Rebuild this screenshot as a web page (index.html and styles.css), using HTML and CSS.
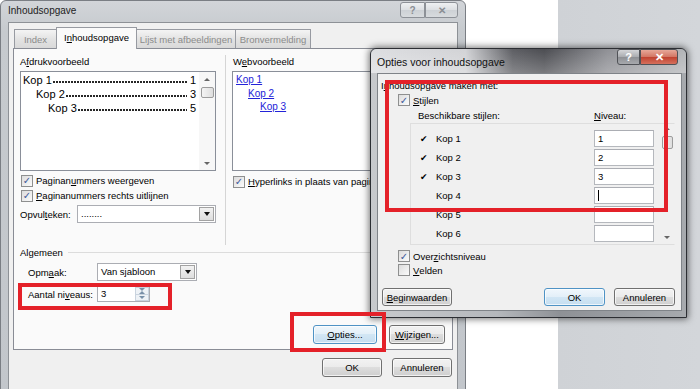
FILE: index.html
```html
<!DOCTYPE html>
<html>
<head>
<meta charset="utf-8">
<title>Inhoudsopgave</title>
<link rel="stylesheet" href="styles.css">
</head>
<body>
<div class="desk">

  <div class="win main">
    <div class="titlebar">
      <span class="title">Inhoudsopgave</span>
      <span class="cap help">?</span>
      <span class="cap close">✕</span>
    </div>
    <div class="client">
      <div class="tabs">
        <span class="tab t-index">Index</span>
        <span class="tab active">I<u>n</u>houdsopgave</span>
        <span class="tab t-lijst">Lijst met afbeeldingen</span>
        <span class="tab t-bron">Bronvermelding</span>
      </div>
      <div class="panel">
        <div class="cols">
          <div class="col left">
            <div class="lbl">A<u>f</u>drukvoorbeeld</div>
            <div class="box preview">
              <div class="lines">
                <div class="toc l1"><span>Kop 1</span><span class="dots"></span><span>1</span></div>
                <div class="toc l2"><span>Kop 2</span><span class="dots"></span><span>3</span></div>
                <div class="toc l3"><span>Kop 3</span><span class="dots"></span><span>5</span></div>
              </div>
              <div class="vscroll">
                <span class="arr up"></span>
                <span class="thumb"></span>
                <span class="grow"></span>
                <span class="arr down"></span>
              </div>
            </div>
            <div class="chk first"><span class="cb">✓</span>Paginan<u>u</u>mmers weergeven</div>
            <div class="chk"><span class="cb">✓</span><u>P</u>aginanummers rechts uitlijnen</div>
            <div class="frow fill">
              <span class="flabel">Opvul<u>t</u>eken:</span>
              <span class="combo w-fill"><span class="val">........</span><span class="drop"><i class="tri"></i></span></span>
            </div>
          </div>
          <div class="col right">
            <div class="lbl">W<u>e</u>bvoorbeeld</div>
            <div class="box web">
              <a class="lk l1">Kop 1</a>
              <a class="lk l2">Kop 2</a>
              <a class="lk l3">Kop 3</a>
            </div>
            <div class="chk web-chk"><span class="cb">✓</span><u>H</u>yperlinks in plaats van paginanummers</div>
          </div>
        </div>
        <div class="group">
          <div class="legend"><span>Algemeen</span><i></i></div>
          <div class="frow opmaak">
            <span class="flabel ind">Opm<u>a</u>ak:</span>
            <span class="combo w-opmaak"><span class="val">Van sjabloon</span><span class="drop"><i class="tri"></i></span></span>
          </div>
          <div class="frow niveaus">
            <span class="flabel ind">Aantal ni<u>v</u>eaus:</span>
            <span class="spin"><span class="val">3</span><span class="spinbtns"><span><i class="tri up-s"></i></span><span><i class="tri"></i></span></span></span>
          </div>
        </div>
        <div class="panel-btns">
          <button class="btn default w-opties"><u>O</u>pties...</button>
          <button class="btn w-wijz"><u>W</u>ijzigen...</button>
        </div>
      </div>
      <div class="dlg-btns">
        <button class="btn w-ok">OK</button>
        <button class="btn w-ok">Annuleren</button>
      </div>
    </div>
  </div>

  <div class="win opts">
    <div class="titlebar">
      <span class="title">Opties voor inhoudsopgave</span>
      <span class="cap help">?</span>
      <span class="cap close">✕</span>
    </div>
    <div class="client">
      <div class="line intro">I<u>n</u>houdsopgave maken met:</div>
      <div class="chk indent"><span class="cb">✓</span><u>S</u>tijlen</div>
      <div class="heads"><span class="h-name">Beschikbare stijlen:</span><span class="h-niv"><u>N</u>iveau:</span></div>
      <div class="stylelist">
        <div class="rows">
          <div class="srow"><span class="tick">✔</span><span>Kop 1</span><span class="inp">1</span></div>
          <div class="srow"><span class="tick">✔</span><span>Kop 2</span><span class="inp">2</span></div>
          <div class="srow"><span class="tick">✔</span><span>Kop 3</span><span class="inp">3</span></div>
          <div class="srow"><span class="tick"></span><span>Kop 4</span><span class="inp"><i class="caret"></i></span></div>
          <div class="srow"><span class="tick"></span><span>Kop 5</span><span class="inp"></span></div>
          <div class="srow"><span class="tick"></span><span>Kop 6</span><span class="inp"></span></div>
        </div>
        <div class="vscroll flat">
          <span class="arr up"></span>
          <span class="thumb"></span>
          <span class="grow"></span>
          <span class="arr down"></span>
        </div>
      </div>
      <div class="chk indent after-list"><span class="cb">✓</span>Over<u>z</u>ichtsniveau</div>
      <div class="chk indent"><span class="cb off"></span><u>V</u>elden</div>
      <div class="opt-btns">
        <button class="btn w-begin"><u>B</u>eginwaarden</button>
        <span class="grow"></span>
        <button class="btn default w-ok2">OK</button>
        <button class="btn w-ok2">Annuleren</button>
      </div>
    </div>
  </div>

  <div class="mark m-niveaus"></div>
  <div class="mark m-opties"></div>
  <div class="mark m-stijlen"></div>
</div>
</body>
</html>
```

FILE: styles.css
```css
* { box-sizing: border-box; }
body { margin: 0; font-family: "Liberation Sans", Arial, sans-serif; font-size: 9.5px; color: #000; }
u { text-decoration: underline; text-underline-offset: 1px; }
button { font-family: inherit; font-size: inherit; }

.desk { position: relative; width: 700px; height: 389px; overflow: hidden; background: linear-gradient(to right, #fff 0, #fff 558px, #cfd2d6 558px, #d3d6da 100%); }

/* windows */
.win { position: absolute; display: flex; flex-direction: column; }
.win .titlebar { display: flex; align-items: flex-start; flex: none; }
.win .client { flex: 1; background: #f0f0f0; display: flex; flex-direction: column; }
.cap { height: 16px; display: flex; align-items: center; justify-content: center; font-weight: bold; }
.cap.help { margin-left: auto; border-radius: 3px 0 0 3px; }
.cap.close { border-radius: 0 3px 3px 0; border-left: none; }

.main { left: 0; top: 0; width: 466px; height: 400px; border: 1px solid #7a7e84; border-radius: 6px 6px 0 0; padding: 0 7px; background: linear-gradient(#d2d5d9, #c6cace 30px, #c2c6cb); }
.main .titlebar { height: 21px; padding-top: 1px; }
.main .title { margin-top: 3px; font-size: 10px; color: #222; }
.main .cap { border: 1px solid #8d9197; background: linear-gradient(#eef0f2, #dcdfe2 50%, #cdd1d5 51%, #d8dbde); color: #8a8e94; font-size: 10px; }
.main .cap.help { width: 25px; }
.main .cap.close { width: 33px; }
.main .client { border: 1px solid #8d9196; border-bottom: none; padding: 4px 4px 0 4px; }

/* tabs */
.tabs { display: flex; align-items: flex-end; height: 21px; padding-left: 1px; }
.tab { height: 19px; border: 1px solid #979aa1; border-bottom: none; border-right: none; background: linear-gradient(#f4f4f4, #e3e3e3 50%, #d9d9d9); color: #8b8b8b; display: flex; align-items: center; justify-content: center; }
.t-index { width: 42px; }
.t-lijst { width: 98px; }
.t-bron { width: 76px; border-right: 1px solid #979aa1; }
.tab.active { width: 81px; height: 22px; margin-bottom: -1px; background: #fafafa; color: #000; position: relative; z-index: 1; border-right: 1px solid #979aa1; padding-bottom: 2px; }
.tab.active + .tab { border-left: none; }

.panel { height: 302px; border: 1px solid #898c95; background: #fafafa; display: flex; flex-direction: column; padding: 6px 0 5px 0; }
.cols { display: flex; height: 190px; flex: none; }
.col.left { width: 211px; padding-left: 6px; }
.col.right { flex: 1; border-left: 1px solid #d5d5d5; padding-left: 6px; overflow: hidden; }
.lbl { height: 14px; line-height: 14px; }
.col.right .lbl { padding-left: 1px; }

.box { height: 100px; margin-top: 2px; border: 1px solid #8a8f99; background: #fff; }
.preview { width: 196px; display: flex; }
.lines { flex: 1; padding: 1px 3px 0 2px; min-width: 0; font-size: 11px; }
.toc { display: flex; height: 14px; line-height: 14px; }
.toc .dots { flex: 1; margin: 0 3px 0 1px; background: radial-gradient(circle at 1px 1px, #222 0.7px, transparent 1.1px) left 0 bottom 3px / 3px 3px repeat-x; }
.toc.l2 { padding-left: 13px; }
.toc.l3 { padding-left: 25px; }

.vscroll { width: 16px; display: flex; flex-direction: column; align-items: center; background: #f7f7f7; }
.vscroll .arr { width: 0; height: 0; border: 3px solid transparent; }
.vscroll .arr.up { border-bottom: 3px solid #666; border-top-width: 0; margin-top: 6px; }
.vscroll .arr.down { border-top: 3px solid #666; border-bottom-width: 0; margin-bottom: 5px; }
.vscroll .thumb { width: 13px; height: 11px; margin-top: 6px; border: 1px solid #9c9c9c; border-radius: 2px; background: linear-gradient(to right, #f4f4f4, #dedede); }
.grow { flex: 1; }

.web { padding: 1px 3px; }
.lk { display: block; font-size: 10px; line-height: 13.5px; color: #2323d8; text-decoration: underline; }
.lk.l2 { padding-left: 12px; }
.lk.l3 { padding-left: 24px; }

/* checkboxes */
.chk { display: flex; align-items: center; height: 15px; white-space: nowrap; }
.chk.first { margin-top: 2px; }
.cb { width: 12px; height: 12px; margin: 0 3px 0 1px; border: 1px solid #8e8f8f; background: linear-gradient(135deg, #dcdcdc, #fbfbfb); display: flex; align-items: center; justify-content: center; font-family: "DejaVu Sans", sans-serif; font-size: 10px; font-weight: bold; color: #3d5a9a; flex: none; }
.web-chk { margin-top: 3px; }

/* form rows */
.frow { display: flex; align-items: center; }
.frow.fill { margin-top: 2px; height: 18px; }
.flabel { flex: none; }
.fill .flabel { width: 57px; }
.ind { padding-left: 14px; width: 83px; }
.combo { display: flex; height: 18px; border: 1px solid #abadb3; background: #fff; }
.combo .val { flex: 1; padding-left: 3px; line-height: 16px; }
.combo .drop { width: 15px; margin: 1px; border: 1px solid #a2a2a2; background: linear-gradient(#f2f2f2, #dedede); display: flex; align-items: center; justify-content: center; }
.tri { width: 0; height: 0; border: 3px solid transparent; border-top: 4px solid #111; border-bottom-width: 0; }
.tri.up-s { border-top-width: 0; border-bottom: 3px solid #7990a8; }
.w-fill { width: 139px; }
.w-opmaak { width: 100px; }

.legend { display: flex; align-items: center; height: 14px; padding-left: 6px; }
.legend i { flex: 1; margin-left: 5px; border-top: 1px solid #dcdcdc; }
.opmaak { margin-top: 4px; height: 18px; }
.niveaus { margin-top: 5px; height: 16px; }
.spin { display: flex; width: 53px; height: 16px; border: 1px solid #abadb3; background: #fff; }
.spin .val { flex: 1; padding-left: 3px; line-height: 14px; }
.spinbtns { width: 14px; display: flex; flex-direction: column; }
.spinbtns span { flex: 1; display: flex; align-items: center; justify-content: center; border: 1px solid #c9d3de; background: #eef2f6; }
.spinbtns span + span { border-top: none; }
.spinbtns .tri { border-top-color: #7990a8; border-top-width: 3px; }

/* buttons */
.btn { height: 19px; padding: 0; border: 1px solid #707070; border-radius: 3px; background: linear-gradient(#f2f2f2 0%, #ebebeb 49%, #dddddd 50%, #cfcfcf 100%); box-shadow: inset 0 0 0 1px rgba(255, 255, 255, .7); color: #000; }
.btn.default { border-color: #4f93c5; background: linear-gradient(#f0f7fc 0%, #e3eff8 49%, #d2e6f4 50%, #c6def0 100%); }
.panel-btns { margin-top: auto; display: flex; justify-content: flex-end; gap: 12px; padding-right: 7px; }
.w-opties { width: 64px; }
.w-wijz { width: 56px; }
.dlg-btns { display: flex; justify-content: flex-end; gap: 10px; margin-top: 8px; padding-right: 1px; }
.w-ok { width: 60px; }

/* options dialog */
.opts { left: 370px; top: 48px; width: 317px; height: 270px; border: 1px solid #2c2e33; border-radius: 6px 6px 0 0; padding: 0 4px 6px 6px; background: linear-gradient(to right, #c7c9cc 0%, #b5b8bc 40%, #8e9196 60%, #a7aaae 100%); box-shadow: 0 0 7px 1px rgba(0, 0, 0, .55); }
.opts .titlebar { height: 24px; margin: 0 -4px 0 -6px; padding: 0 6px 0 6px; background: linear-gradient(rgba(255, 255, 255, 0), rgba(255, 255, 255, .25)), linear-gradient(to right, #dcdde0 0%, #d2d3d6 30%, #5d5e63 45%, #4c4d52 55%, #8f9095 75%, #b3b5b8 100%); border-radius: 6px 6px 0 0; }
.opts .title { margin-top: 7px; font-size: 10.5px; color: #111; }
.opts .cap { height: 16px; border: 1px solid #505257; }
.opts .cap.help { width: 23px; color: #fff; font-size: 11px; background: linear-gradient(#d4d5d8, #a9abaf 50%, #8e9095 51%, #a7a9ad); }
.opts .cap.close { width: 38px; margin-right: 2px; color: #fff; font-size: 11px; background: linear-gradient(#e7a898, #d27563 50%, #c0422f 51%, #d5705c); }
.opts .client { border: 1px solid #7f8388; padding: 5px 6px 4px 0; }

.line.intro { height: 14px; line-height: 14px; padding-left: 3px; }
.indent { padding-left: 19px; height: 14px; }
.heads { display: flex; height: 14px; line-height: 14px; margin-top: 2px; }
.h-name { padding-left: 40px; width: 216px; }
.stylelist { display: flex; height: 122px; margin-left: 32px; border: 1px solid #dedede; border-right-color: #f0f0f0; overflow: hidden; }
.rows { flex: 1; padding-top: 5px; }
.srow { display: flex; align-items: center; height: 19px; }
.srow .tick { width: 25px; padding-left: 9px; font-family: "DejaVu Sans", sans-serif; font-size: 9px; }
.srow span:nth-child(2) { width: 158px; }
.inp { width: 60px; height: 17px; border: 1px solid #b5b8bd; border-top-color: #abadb3; background: #fff; padding-left: 3px; line-height: 15px; }
.caret { display: inline-block; width: 1px; height: 11px; background: #000; vertical-align: middle; margin-top: -2px; }
.vscroll.flat { width: 14px; background: #f0f0f0; }
.vscroll.flat .arr.up { margin-top: 3px; }
.vscroll.flat .thumb { width: 11px; height: 13px; margin-top: 6px; }
.after-list { margin-top: 4px; }
.opt-btns { margin-top: auto; display: flex; gap: 9px; padding-left: 4px; }
.opt-btns .btn { height: 18px; }
.opt-btns .grow { flex: 1; }
.w-begin { width: 70px; }
.w-ok2 { width: 61px; }

/* red markings */
.mark { position: absolute; border: 4px solid #e42129; }
.m-niveaus { left: 18px; top: 283px; width: 154px; height: 27px; }
.m-opties { left: 290px; top: 312px; width: 96px; height: 40px; }
.m-stijlen { left: 385px; top: 80px; width: 283px; height: 132px; }
```
